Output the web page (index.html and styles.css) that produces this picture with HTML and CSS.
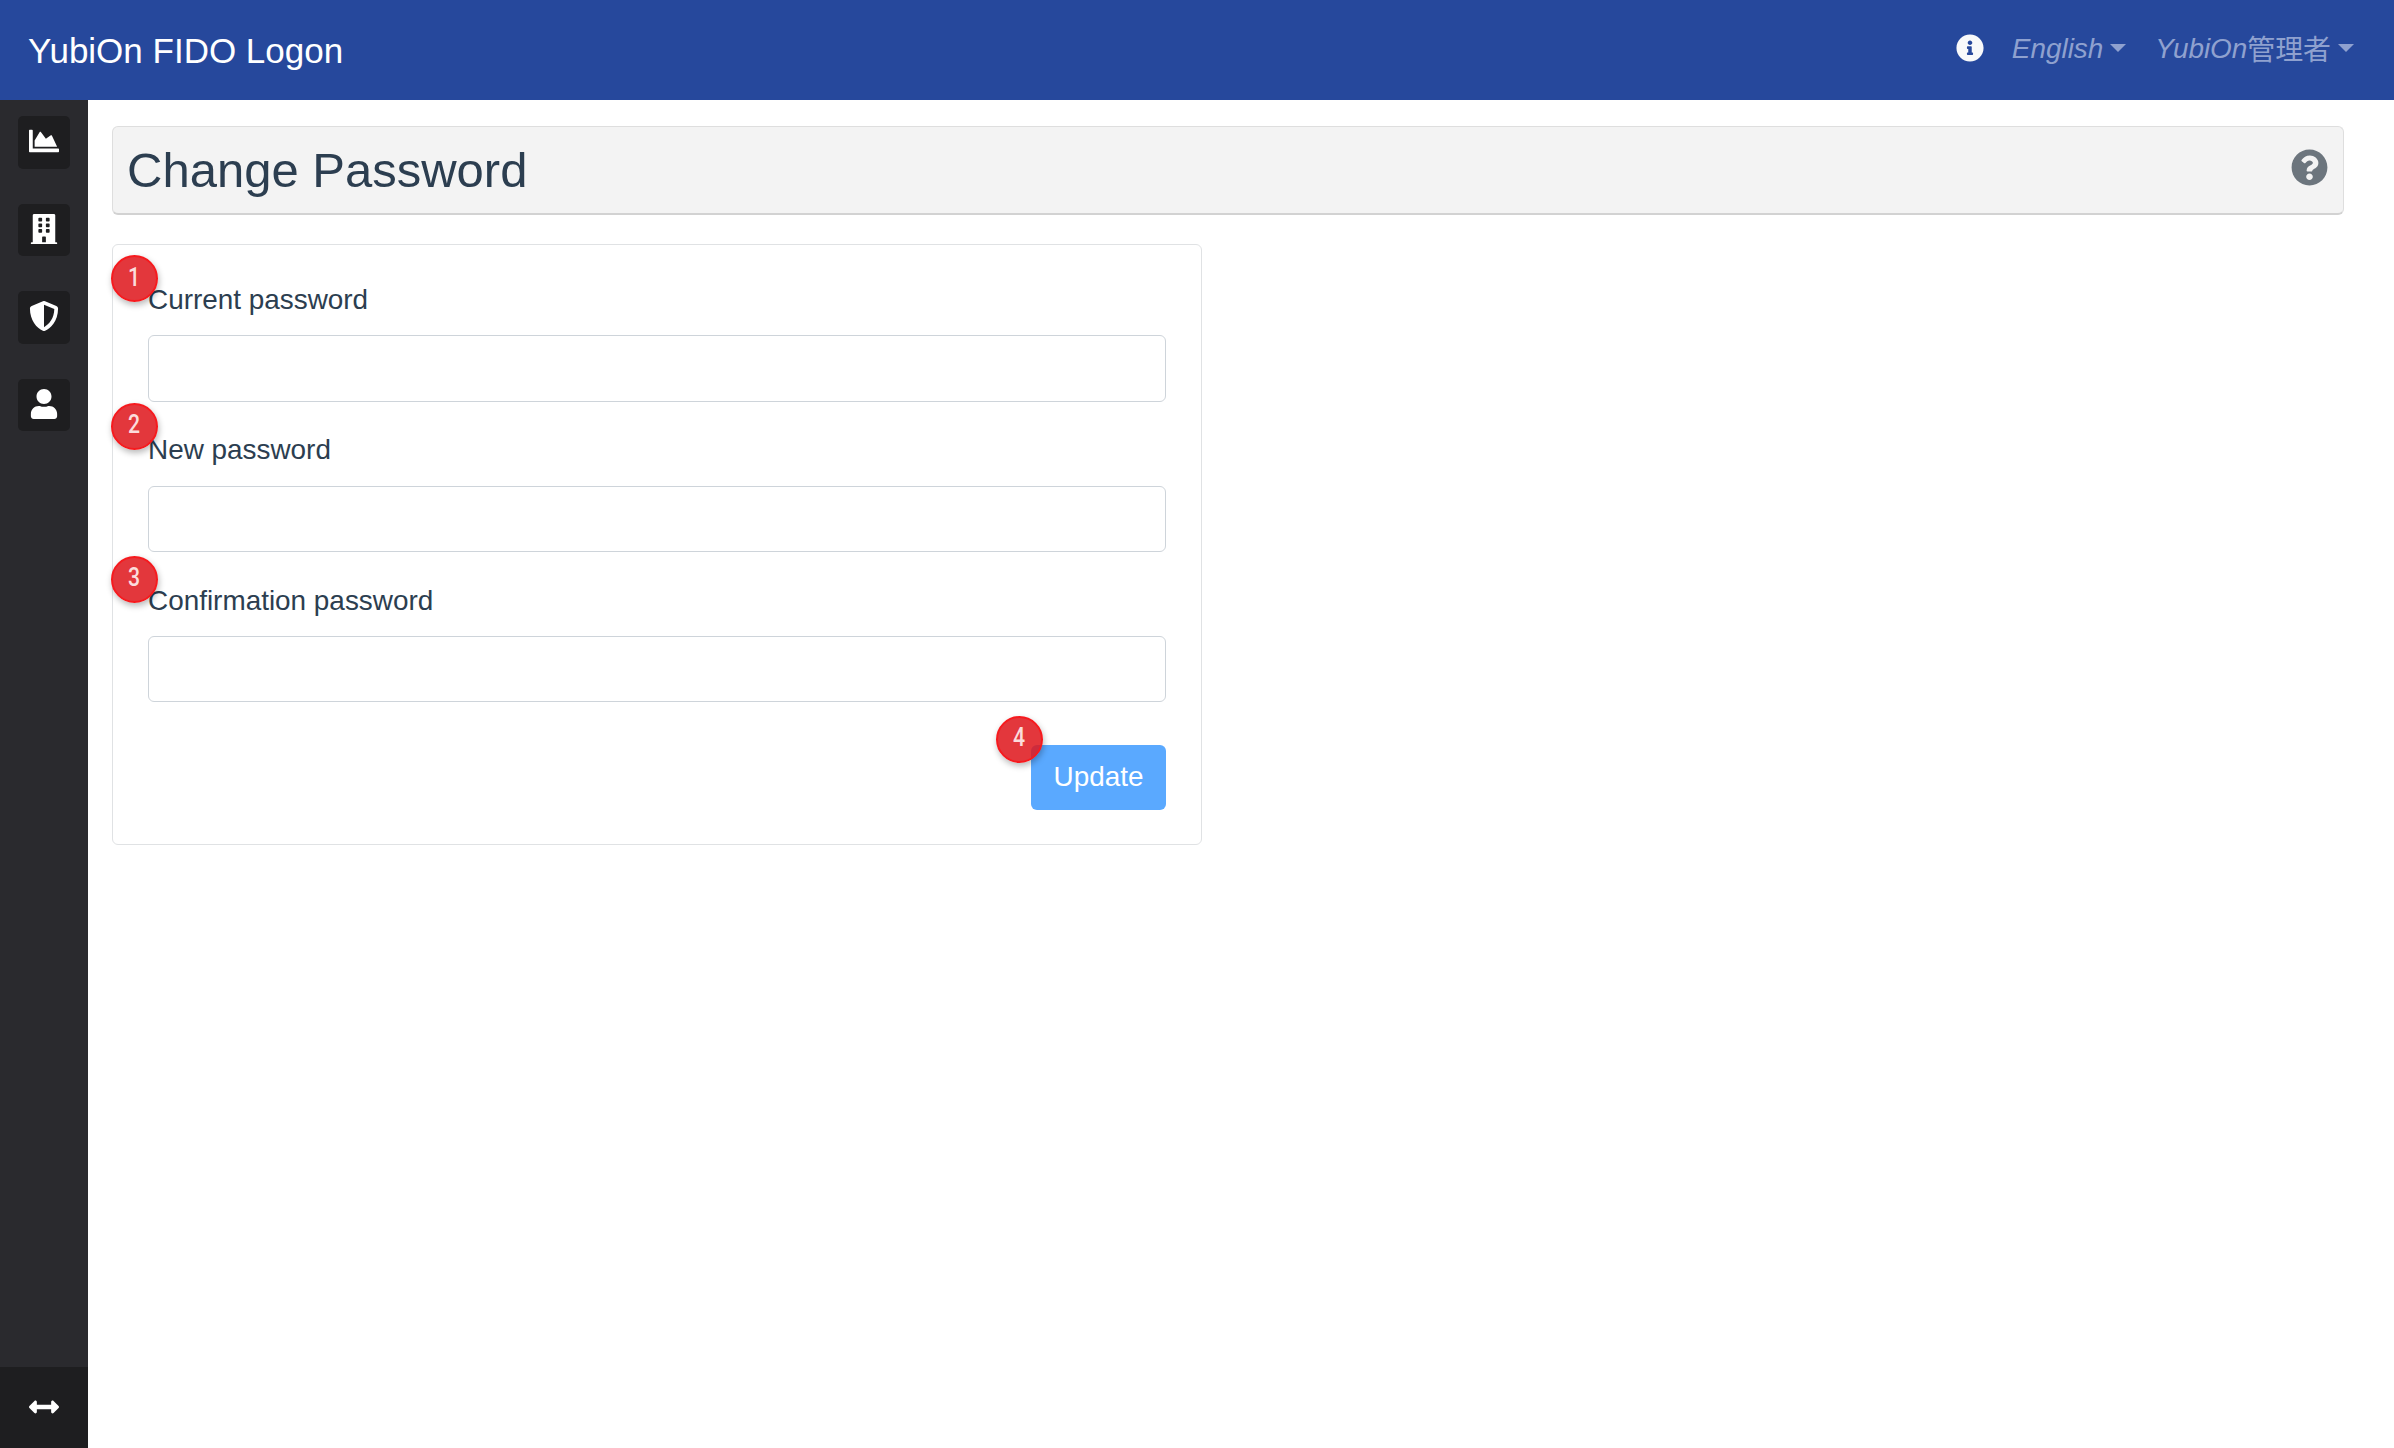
FILE: index.html
```html
<!DOCTYPE html>
<html lang="en">
<head>
<meta charset="utf-8">
<title>Change Password</title>
<link rel="stylesheet" href="styles.css">
</head>
<body>
<header class="topbar">
  <a class="brand">YubiOn FIDO Logon</a>
  <nav class="topnav">
    <svg class="info-icon" viewBox="0 0 512 512"><circle cx="256" cy="256" r="180" fill="#27489c"/><path fill="#f8f9fa" d="M256 8C119.043 8 8 119.083 8 256c0 136.997 111.043 248 248 248s248-111.003 248-248C504 119.083 392.957 8 256 8zm0 110c23.196 0 42 18.804 42 42s-18.804 42-42 42-42-18.804-42-42 18.804-42 42-42zm56 254c0 6.627-5.373 12-12 12h-88c-6.627 0-12-5.373-12-12v-24c0-6.627 5.373-12 12-12h12v-64h-12c-6.627 0-12-5.373-12-12v-24c0-6.627 5.373-12 12-12h64c6.627 0 12 5.373 12 12v100h12c6.627 0 12 5.373 12 12v24z"/></svg>
    <a class="nav-link">English<span class="caret"></span></a>
    <a class="nav-link nav-user">YubiOn<span class="cjk">管理者</span><span class="caret"></span></a>
  </nav>
</header>
<div class="shell">
  <aside class="sidebar">
    <ul class="side-list">
      <li class="side-btn"><svg class="side-icon" viewBox="0 0 512 512"><path d="M500 384c6.6 0 12 5.4 12 12v40c0 6.6-5.4 12-12 12H12c-6.6 0-12-5.4-12-12V76c0-6.6 5.4-12 12-12h40c6.6 0 12 5.4 12 12v308h436zM372.7 159.5L288 216l-85.3-113.7c-5.1-6.8-15.5-6.3-19.9 1L96 248v104h384l-89.9-187.8c-3.2-6.5-11.4-8.7-17.4-4.7z"/></svg></li>
      <li class="side-btn"><svg class="side-icon" viewBox="0 0 448 512"><path d="M436 480h-20V24c0-13.255-10.745-24-24-24H56C42.745 0 32 10.745 32 24v456H12c-6.627 0-12 5.373-12 12v20h448v-20c0-6.627-5.373-12-12-12zM128 76c0-6.627 5.373-12 12-12h40c6.627 0 12 5.373 12 12v40c0 6.627-5.373 12-12 12h-40c-6.627 0-12-5.373-12-12V76zm0 96c0-6.627 5.373-12 12-12h40c6.627 0 12 5.373 12 12v40c0 6.627-5.373 12-12 12h-40c-6.627 0-12-5.373-12-12v-40zm52 148h-40c-6.627 0-12-5.373-12-12v-40c0-6.627 5.373-12 12-12h40c6.627 0 12 5.373 12 12v40c0 6.627-5.373 12-12 12zm76 160h-64v-84c0-6.627 5.373-12 12-12h40c6.627 0 12 5.373 12 12v84zm64-172c0 6.627-5.373 12-12 12h-40c-6.627 0-12-5.373-12-12v-40c0-6.627 5.373-12 12-12h40c6.627 0 12 5.373 12 12v40zm0-96c0 6.627-5.373 12-12 12h-40c-6.627 0-12-5.373-12-12v-40c0-6.627 5.373-12 12-12h40c6.627 0 12 5.373 12 12v40zm0-96c0 6.627-5.373 12-12 12h-40c-6.627 0-12-5.373-12-12V76c0-6.627 5.373-12 12-12h40c6.627 0 12 5.373 12 12v40z"/></svg></li>
      <li class="side-btn"><svg class="side-icon" viewBox="0 0 512 512"><path d="M466.5 83.7l-192-80a48.15 48.15 0 0 0-36.9 0l-192 80C27.7 91.1 16 108.6 16 128c0 198.5 114.5 335.7 221.5 380.3 11.8 4.9 25.1 4.9 36.9 0C360.1 472.6 496 349.3 496 128c0-19.4-11.7-36.9-29.5-44.3zM256.1 446.3l-.1-381 175.9 73.3c-3.3 151.4-82.1 261.1-175.8 307.7z"/></svg></li>
      <li class="side-btn"><svg class="side-icon" viewBox="0 0 448 512"><path d="M224 256c70.7 0 128-57.3 128-128S294.7 0 224 0 96 57.3 96 128s57.3 128 128 128zm89.6 32h-16.7c-22.2 10.2-46.9 16-72.9 16s-50.6-5.8-72.9-16h-16.7C60.2 288 0 348.2 0 422.4V464c0 26.5 21.5 48 48 48h352c26.5 0 48-21.5 48-48v-41.6c0-74.2-60.2-134.4-134.4-134.4z"/></svg></li>
    </ul>
    <div class="side-foot"><svg class="side-icon" viewBox="0 0 512 512"><path d="M377.941 169.941V216H134.059v-46.059c0-21.382-25.851-32.09-40.971-16.971L7.029 239.029c-9.373 9.373-9.373 24.569 0 33.941l86.059 86.059c15.119 15.119 40.971 4.411 40.971-16.971V296h243.882v46.059c0 21.382 25.851 32.09 40.971 16.971l86.059-86.059c9.373-9.373 9.373-24.569 0-33.941L418.912 152.97c-15.12-15.119-40.971-4.41-40.971 16.971z"/></svg></div>
  </aside>
  <main class="content">
    <div class="page-title">
      <h1 class="title-text">Change Password</h1>
      <svg class="help-icon" viewBox="0 0 512 512"><path d="M504 256c0 136.997-111.043 248-248 248S8 392.997 8 256C8 119.083 119.043 8 256 8s248 111.083 248 248zM262.655 90c-54.497 0-89.255 22.957-116.549 63.758-3.536 5.286-2.353 12.415 2.715 16.258l34.699 26.31c5.205 3.947 12.621 3.008 16.665-2.122 17.864-22.658 30.113-35.797 57.303-35.797 20.429 0 45.698 13.148 45.698 32.958 0 14.976-12.363 22.667-32.534 33.976C247.128 238.528 216 254.941 216 296v4c0 6.627 5.373 12 12 12h56c6.627 0 12-5.373 12-12v-1.333c0-28.462 83.186-29.647 83.186-106.667 0-58.002-60.165-102-116.531-102zM256 338c-25.365 0-46 20.635-46 46 0 25.364 20.635 46 46 46s46-20.636 46-46c0-25.365-20.635-46-46-46z"/></svg>
    </div>
    <form class="card">
      <div class="field">
        <span class="badge badge-field"><span class="badge-num">1</span></span>
        <label class="field-label">Current password</label>
        <input class="field-input" type="password">
      </div>
      <div class="field">
        <span class="badge badge-field badge-raised"><span class="badge-num">2</span></span>
        <label class="field-label">New password</label>
        <input class="field-input" type="password">
      </div>
      <div class="field">
        <span class="badge badge-field"><span class="badge-num">3</span></span>
        <label class="field-label">Confirmation password</label>
        <input class="field-input" type="password">
      </div>
      <div class="actions">
        <span class="submit-wrap">
          <button class="submit" type="button">Update</button>
          <span class="badge badge-submit"><span class="badge-num">4</span></span>
        </span>
      </div>
    </form>
  </main>
</div>
</body>
</html>
```

FILE: styles.css
```css
* { box-sizing: border-box; }
html, body { height: 100%; }
body {
  margin: 0;
  height: 100vh;
  display: flex;
  flex-direction: column;
  overflow: hidden;
  background: #fff;
  color: #2c3e50;
  font-family: "Liberation Sans", Arial, "Noto Sans CJK JP", sans-serif;
  font-size: 27.9px;
}

/* top bar */
.topbar {
  flex: 0 0 100px;
  display: flex;
  align-items: center;
  justify-content: space-between;
  padding: 0 40px 0 28px;
  background: #26489c;
}
.brand { color: #fff; font-size: 35px; line-height: 1; }
.topnav { display: flex; align-items: center; padding-bottom: 3px; }
.info-icon { width: 28px; height: 28px; margin-right: 28px; }
.nav-link {
  display: flex;
  align-items: center;
  color: #8fa1cf;
  font-style: italic;
  line-height: 1.5;
}
.nav-user { margin-left: 29px; }
.cjk { font-family: "Noto Sans CJK JP", sans-serif; font-style: normal; }
.caret {
  width: 0;
  height: 0;
  margin-left: 7px;
  border-top: 8px solid #8fa1cf;
  border-left: 8px solid transparent;
  border-right: 8px solid transparent;
}

/* shell */
.shell { flex: 1; display: flex; min-height: 0; }
.sidebar {
  flex: 0 0 88px;
  display: flex;
  flex-direction: column;
  justify-content: space-between;
  background: #2a2a2e;
}
.side-list {
  list-style: none;
  margin: 0;
  padding: 16px 18px 0;
  display: flex;
  flex-direction: column;
  gap: 35px;
}
.side-btn {
  height: 52.5px;
  padding-bottom: 2px;
  display: flex;
  align-items: center;
  justify-content: center;
  border-radius: 5px;
  background: #1e1e20;
}
.side-icon { width: 30px; height: 30px; fill: #fff; }
.side-foot {
  height: 81px;
  padding-bottom: 2px;
  display: flex;
  align-items: center;
  justify-content: center;
  background: #1e1e20;
}

/* content */
.content { flex: 1; min-width: 0; padding: 26px 50px 0 24px; }
.page-title {
  height: 89px;
  display: flex;
  align-items: center;
  justify-content: space-between;
  padding: 0 15px 0 14px;
  background: #f3f3f3;
  border: 1.5px solid #dedede;
  border-bottom: 2px solid #d2d2d2;
  border-radius: 6px;
}
.title-text { margin: 0; font-size: 49px; font-weight: 400; line-height: 1.2; }
.help-icon { width: 37px; height: 37px; margin-bottom: 5px; fill: #6c757d; }

.card {
  width: 1090px;
  margin-top: 29px;
  padding: 34px 35px 34px;
  border: 1.5px solid #e0e2e4;
  border-radius: 6px;
  background: #fff;
}
.field { position: relative; margin-bottom: 27.5px; }
.field-label { display: block; line-height: 41.25px; margin-bottom: 15px; }
.field-input {
  display: block;
  width: 100%;
  height: 66.5px;
  padding: 0 18px;
  border: 1.5px solid #ced4da;
  border-radius: 6px;
  background: #fff;
  font: inherit;
}
.actions { display: flex; justify-content: flex-end; padding-top: 15px; }
.submit-wrap { position: relative; display: inline-block; }
.submit {
  display: block;
  width: 135px;
  height: 65px;
  border: 0;
  border-radius: 6px;
  background: #5aa9ff;
  color: #fff;
  font: inherit;
}

/* numbered markers */
.badge {
  position: absolute;
  width: 47px;
  height: 47px;
  display: flex;
  align-items: center;
  justify-content: center;
  border: 2px solid #f61a1e;
  border-radius: 50%;
  background: rgba(222, 22, 28, .86);
  box-shadow: 1px 3px 6px rgba(0, 0, 0, .28);
  color: #fbdcdc;
  font-family: Roboto, sans-serif;
  font-size: 25px;
  font-weight: 500;
  line-height: 1;
}
.badge-num { display: block; margin-bottom: 3px; transform: scaleX(.85); }
.badge-field { left: -37.5px; top: -24px; }
.badge-raised { top: -26.5px; }
.badge-submit { left: -35px; top: -29px; }
```
